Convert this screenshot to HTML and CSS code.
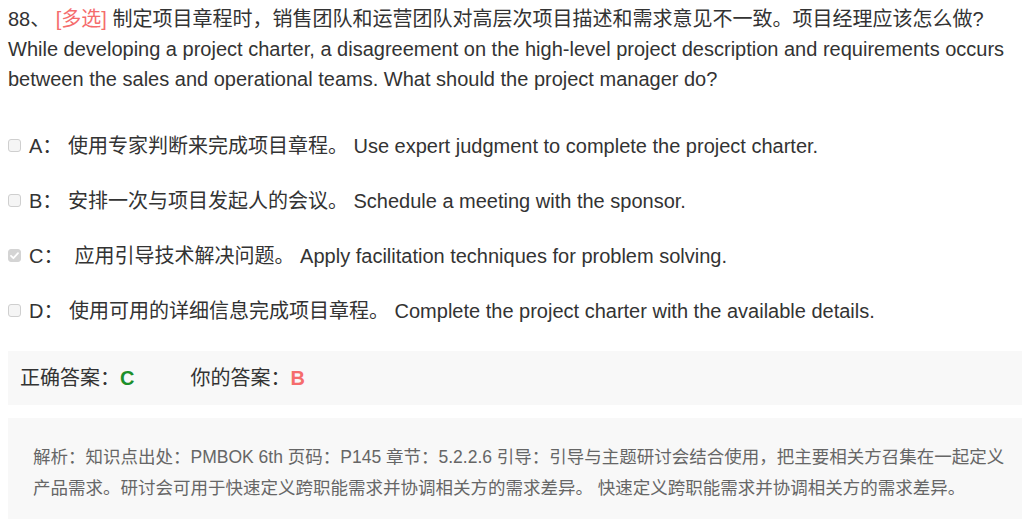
FILE: index.html
```html
<!DOCTYPE html>
<html lang="zh-CN">
<head>
<meta charset="utf-8">
<title>88</title>
<link rel="stylesheet" href="styles.css">
</head>
<body>
<div class="page">
  <div class="question"><span class="num">88、</span> <span class="tag">[多选]</span> 制定项目章程时，销售团队和运营团队对高层次项目描述和需求意见不一致。项目经理应该怎么做?<br>While developing a project charter, a disagreement on the high-level project description and requirements occurs between the sales and operational teams. What should the project manager do?</div>

  <ul class="options">
    <li class="option"><span class="box"></span><span class="opt-text">A： 使用专家判断来完成项目章程。 Use expert judgment to complete the project charter.</span></li>
    <li class="option"><span class="box"></span><span class="opt-text">B： 安排一次与项目发起人的会议。 Schedule a meeting with the sponsor.</span></li>
    <li class="option"><span class="box checked"><svg viewBox="0 0 13 13" width="13" height="13"><path d="M3 6.8 L5.4 9.2 L10 4.2" fill="none" stroke="#ffffff" stroke-width="1.8" stroke-linecap="round" stroke-linejoin="round"/></svg></span><span class="opt-text">C： &nbsp;应用引导技术解决问题。 Apply facilitation techniques for problem solving.</span></li>
    <li class="option"><span class="box"></span><span class="opt-text">D： 使用可用的详细信息完成项目章程。 Complete the project charter with the available details.</span></li>
  </ul>

  <div class="answer">
    <span class="label">正确答案：</span><span class="correct">C</span>
    <span class="label mine">你的答案：</span><span class="wrong">B</span>
  </div>

  <div class="analysis">解析：知识点出处：PMBOK 6th 页码：P145 章节：5.2.2.6 引导：引导与主题研讨会结合使用，把主要相关方召集在一起定义产品需求。研讨会可用于快速定义跨职能需求并协调相关方的需求差异。 快速定义跨职能需求并协调相关方的需求差异。</div>
</div>
</body>
</html>
```

FILE: styles.css
```css
html, body {
  margin: 0;
  padding: 0;
  background: #ffffff;
}

body {
  font-family: "Liberation Sans", Arial, "Noto Sans CJK SC", sans-serif;
  color: #333333;
}

.page {
  padding: 4px 0 0 8px;
}

.question {
  font-size: 20px;
  line-height: 30px;
  color: #333333;
  padding-right: 10px;
}

.tag {
  color: #f56c6c;
}

.options {
  list-style: none;
  margin: 37px 0 0 0;
  padding: 0;
}

.option {
  display: flex;
  align-items: center;
  height: 30px;
  line-height: 30px;
  font-size: 20px;
  margin-bottom: 25px;
  white-space: nowrap;
}

.box {
  box-sizing: border-box;
  width: 13px;
  height: 13px;
  margin: 0 8px 0 0;
  flex: none;
  border: 1px solid #cfcfcf;
  border-radius: 3px;
  background: #f5f5f5;
  display: flex;
  align-items: center;
  justify-content: center;
  position: relative;
  top: -1px;
}

.box.checked {
  border-color: #d4d4d4;
  background: #d4d4d4;
}

.box svg {
  display: block;
  flex: none;
}

.answer {
  background: #f8f8f8;
  height: 30px;
  line-height: 30px;
  padding: 12px;
  font-size: 20px;
  color: #333333;
  display: flex;
  align-items: center;
}

.correct {
  color: #1c8f2a;
  font-weight: bold;
}

.mine {
  margin-left: 56px;
}

.wrong {
  color: #f56c6c;
  font-weight: bold;
}

.analysis {
  margin-top: 13px;
  background: #f8f8f8;
  padding: 24px 8px 30px 25px;
  font-size: 17.5px;
  line-height: 31px;
  color: #666666;
}
```
